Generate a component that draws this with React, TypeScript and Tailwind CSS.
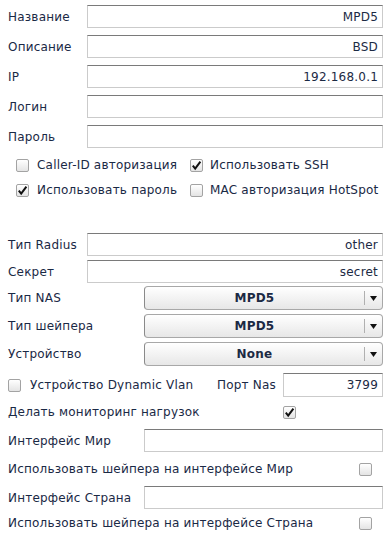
import React from "react";

const font = { fontFamily: '"DejaVu Sans", Verdana, sans-serif' };

function TextInput({ value = "", className = "" }: { value?: string; className?: string }) {
  return (
    <div
      className={`h-[23px] bg-white border border-[#cbcbcb] border-t-[#7a7a7a] flex items-center justify-end pr-[4px] text-[12px] text-[#1c2a44] ${className}`}
    >
      {value}
    </div>
  );
}

function Check({ checked = false }: { checked?: boolean }) {
  return (
    <span className="w-[13px] h-[13px] shrink-0 border border-[#a3a3a3] rounded-[2px] bg-gradient-to-b from-white to-[#e4e4e4] relative inline-block">
      {checked && (
        <svg viewBox="0 0 13 13" className="absolute inset-0 w-[13px] h-[13px] -ml-px -mt-px">
          <path d="M2.8 6.6 L5.2 9.6 L10.4 2.6" fill="none" stroke="#111" strokeWidth="2" />
        </svg>
      )}
    </span>
  );
}

function Select({ value }: { value: string }) {
  return (
    <div className="h-[24px] flex-1 flex items-center rounded-[4px] border border-[#a8a8a8] border-l-[#8a8a8a] bg-gradient-to-b from-white to-[#e7e7e7]">
      <span className="flex-1 text-center text-[12px] font-bold text-[#1c2a44]">{value}</span>
      <span className="w-px h-[14px] bg-[#b0b0b0]" />
      <span className="w-[17px] flex justify-center">
        <svg viewBox="0 0 7 5" className="w-[7px] h-[5px]">
          <path d="M0 0 H7 L3.5 5 Z" fill="#111" />
        </svg>
      </span>
    </div>
  );
}

export default function App() {
  const top = [
    ["Название", "MPD5"],
    ["Описание", "BSD"],
    ["IP", "192.168.0.1"],
    ["Логин", ""],
    ["Пароль", ""],
  ];
  return (
    <div className="w-[392px] h-[537px] bg-white text-[12px] tracking-[0.2px] text-[#1a2945] pt-[5px] pr-[9px] overflow-hidden" style={font}>
      <div className="flex flex-col gap-[7px]">
        {top.map(([label, value]) => (
          <div key={label} className="flex items-center">
            <span className="w-[87px] pl-[8px]">{label}</span>
            <TextInput value={value} className="flex-1" />
          </div>
        ))}
      </div>

      <div className="mt-[7px] grid grid-cols-[174px_1fr] pl-[16px]">
        <label className="h-[20px] flex items-center gap-[8px]">
          <Check /> Caller-ID авторизация
        </label>
        <label className="h-[20px] flex items-center gap-[7px]">
          <Check checked /> Использовать SSH
        </label>
        <label className="h-[20px] mt-[5px] flex items-center gap-[8px]">
          <Check checked /> Использовать пароль
        </label>
        <label className="h-[20px] mt-[5px] flex items-center gap-[7px]">
          <Check /> MAC авторизация HotSpot
        </label>
      </div>

      <div className="mt-[33px] flex items-center">
        <span className="w-[87px] pl-[8px]">Тип Radius</span>
        <TextInput value="other" className="flex-1" />
      </div>
      <div className="mt-[4px] flex items-center">
        <span className="w-[87px] pl-[8px]">Секрет</span>
        <TextInput value="secret" className="flex-1" />
      </div>

      <div className="mt-[3px] flex flex-col gap-[4px]">
        {[
          ["Тип NAS", "MPD5"],
          ["Тип шейпера", "MPD5"],
          ["Устройство", "None"],
        ].map(([label, value]) => (
          <div key={label} className="flex items-center">
            <span className="w-[144px] pl-[8px]">{label}</span>
            <Select value={value} />
          </div>
        ))}
      </div>

      <div className="mt-[7px] flex items-center pl-[8px]">
        <label className="w-[209px] flex items-center gap-[9px]">
          <Check /> Устройство Dynamic Vlan
        </label>
        <span className="w-[66px]">Порт Nas</span>
        <TextInput value="3799" className="flex-1 h-[24px]" />
      </div>

      <div className="mt-[5px] h-[20px] flex items-center pl-[8px]">
        <span className="w-[275px]">Делать мониторинг нагрузок</span>
        <Check checked />
      </div>

      <div className="mt-[7px] flex items-center">
        <span className="w-[144px] pl-[8px]">Интерфейс Мир</span>
        <TextInput className="flex-1" />
      </div>

      <div className="mt-[7px] h-[20px] flex items-center pl-[8px]">
        <span className="w-[351px]">Использовать шейпера на интерфейсе Мир</span>
        <Check />
      </div>

      <div className="mt-[7px] flex items-center">
        <span className="w-[144px] pl-[8px]">Интерфейс Страна</span>
        <TextInput className="flex-1" />
      </div>

      <div className="mt-[4px] h-[20px] flex items-center pl-[8px]">
        <span className="w-[351px]">Использовать шейпера на интерфейсе Страна</span>
        <Check />
      </div>
    </div>
  );
}
